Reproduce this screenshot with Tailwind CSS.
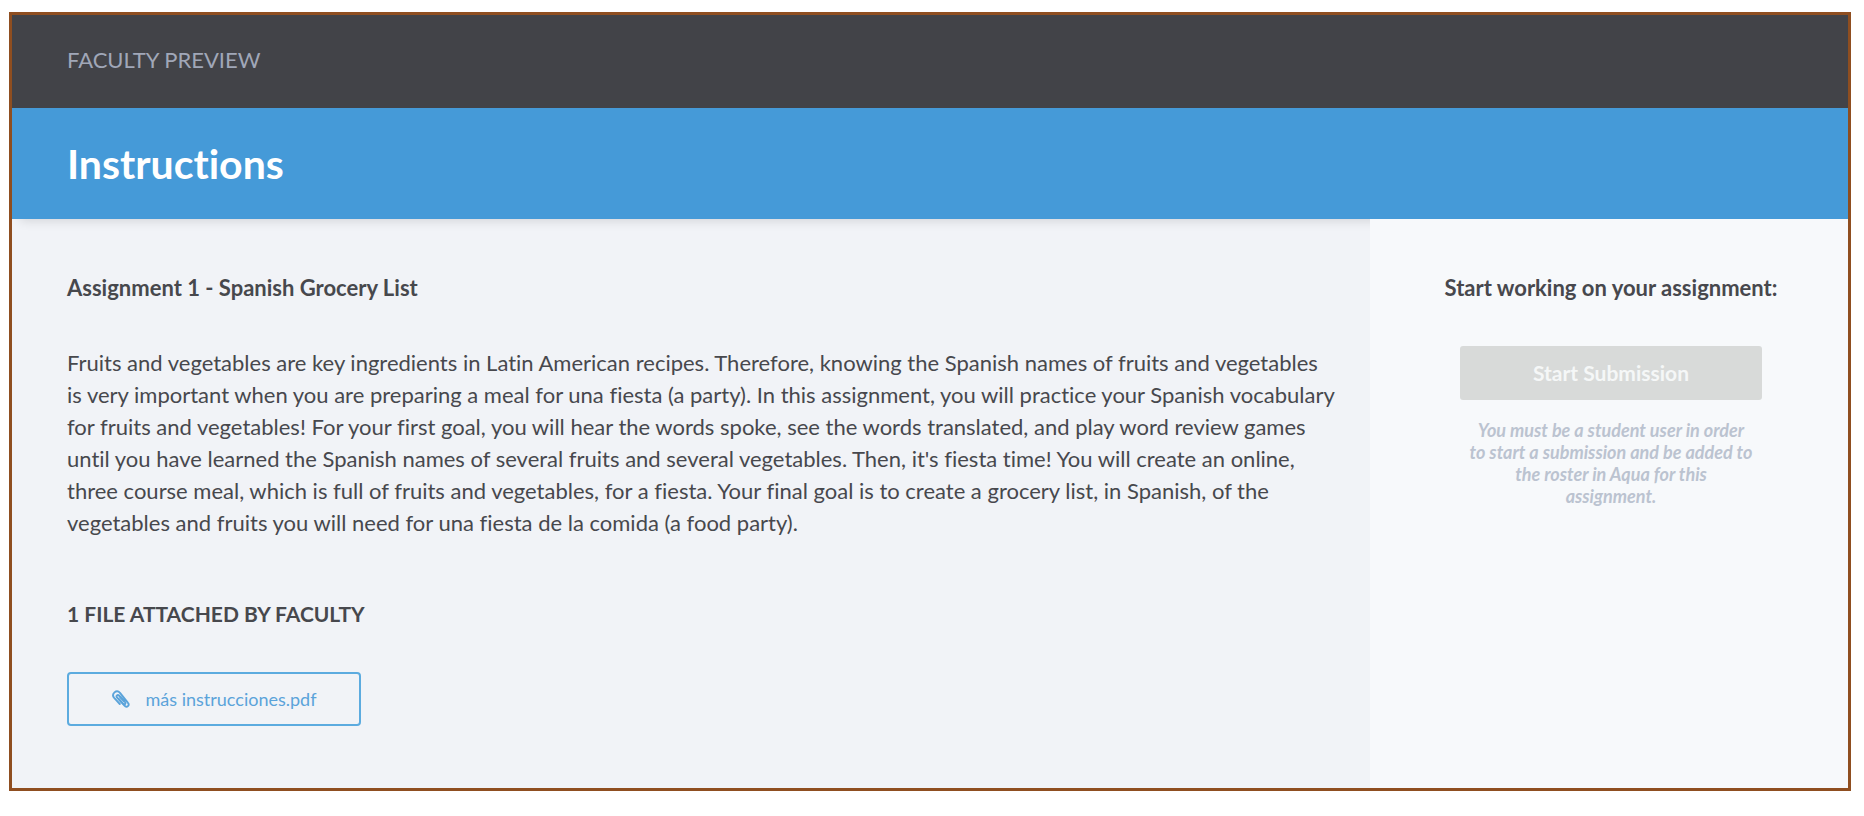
<!DOCTYPE html>
<html lang="en">
<head>
  <meta charset="UTF-8">
  <meta name="viewport" content="width=device-width, initial-scale=1.0">
  <title>Instructions | Faculty Preview</title>
  <script src="https://cdn.jsdelivr.net/npm/@tailwindcss/browser@4"></script>
</head>
<body class="bg-white font-['Lato',sans-serif] text-[#47484d] [font-variant-ligatures:none]">
  <div class="mt-3 mr-[13px] mb-6 ml-[9px] border-3 border-[#8f4e20]">
    <header>
      <div class="bg-[#424348] px-[55px] pt-[29px] pb-8">
        <p class="text-[22px] leading-8 text-[#a0a7b8]">FACULTY PREVIEW</p>
      </div>
      <div class="relative z-10 bg-[#459ad8] px-[55px] pt-8 pb-[31px] shadow-[0_10px_10px_-8px_rgba(0,0,0,0.12)]">
        <h1 class="text-[41px] leading-12 font-bold text-white">Instructions</h1>
      </div>
    </header>

    <div class="flex">
      <main class="flex-1 bg-[#f1f3f7] px-[55px] pt-[53px] pb-[62px]">
        <h2 class="text-[22px] leading-8 font-bold">Assignment 1 - Spanish Grocery List</h2>
        <p class="mt-[43px] -mr-8 text-[22px] leading-8">
          Fruits and vegetables are key ingredients in Latin American recipes. Therefore, knowing the Spanish names of fruits and vegetables<br>
          is very important when you are preparing a meal for una fiesta (a party). In this assignment, you will practice your Spanish vocabulary<br>
          for fruits and vegetables! For your first goal, you will hear the words spoke, see the words translated, and play word review games<br>
          until you have learned the Spanish names of several fruits and several vegetables. Then, it's fiesta time! You will create an online,<br>
          three course meal, which is full of fruits and vegetables, for a fiesta. Your final goal is to create a grocery list, in Spanish, of the<br>
          vegetables and fruits you will need for una fiesta de la comida (a food party).
        </p>

        <h3 class="mt-[59px] text-[21px] leading-8 font-bold">1 FILE ATTACHED BY FACULTY</h3>
        <a href="#" class="mt-[42px] flex h-[54px] w-[294px] items-center justify-center gap-4 rounded-[4px] border-2 border-[#5cabdf] text-[18px] text-[#5ba3da]">
          <svg class="size-[18px]" viewBox="0 0 18 18" fill="none" stroke="currentColor" stroke-width="1.9" stroke-linecap="round" stroke-linejoin="round" aria-hidden="true">
            <path d="M12 11 7 5.5C5.600 4 3.700 5.900 5 7.400l7.500 8.300c2.400 2.600 5.600-.5 3.300-3.100L8 2.800C4.500-1-1.200 3.800 2.200 7.900l5.600 6.100"/>
            <path d="m7 9.200 4.300 4.600c1.300 1.300 2.900-.2 1.800-1.600L8.300 7"/>
          </svg>
          más instrucciones.pdf
        </a>
      </main>

      <aside class="relative z-20 w-[478px] shrink-0 bg-[#f7f9fb] pt-[53px] pr-8 pl-9 text-center">
        <h2 class="text-[22px] leading-8 font-bold">Start working on your assignment:</h2>
        <div class="mx-auto mt-[42px] w-[302px]">
          <button type="button" disabled class="h-[54px] w-full rounded-[3px] bg-[#d8dad9] text-[21px] font-bold text-[#f5f7f7]">Start Submission</button>
          <p class="mt-[19px] text-[18px] leading-[22px] font-bold text-[#bbc3d0] italic">
            You must be a student user in order<br>
            to start a submission and be added to<br>
            the roster in Aqua for this<br>
            assignment.
          </p>
        </div>
      </aside>
    </div>
  </div>
</body>
</html>
